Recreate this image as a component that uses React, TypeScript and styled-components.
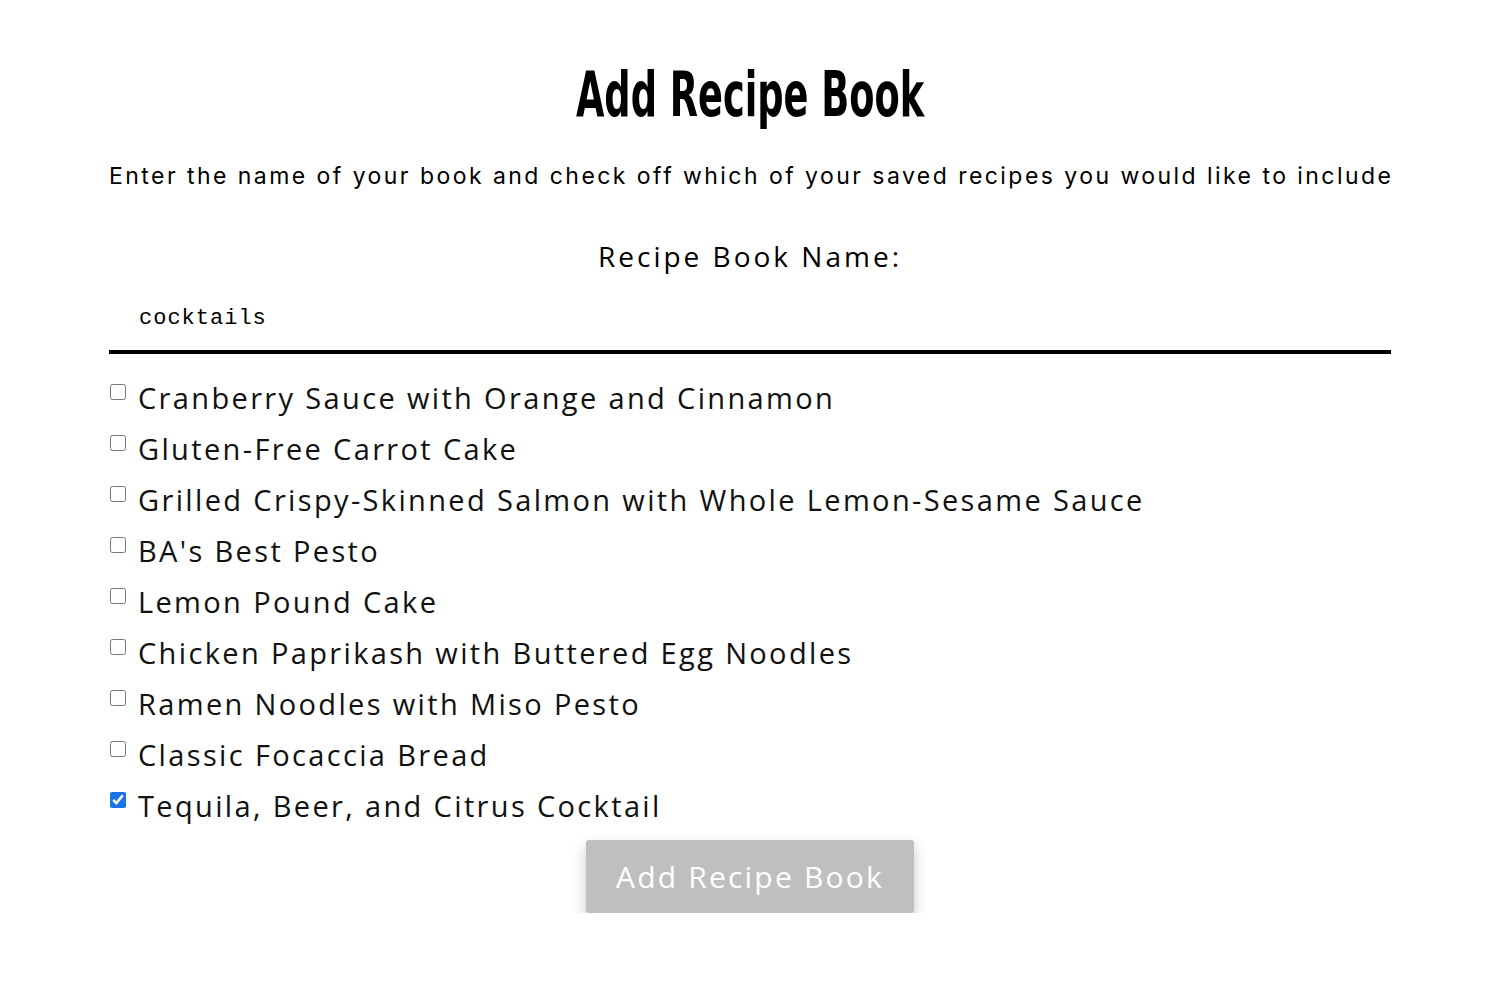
import styled, { createGlobalStyle } from "styled-components";

const recipes = [
  { name: "Cranberry Sauce with Orange and Cinnamon", checked: false },
  { name: "Gluten-Free Carrot Cake", checked: false },
  { name: "Grilled Crispy-Skinned Salmon with Whole Lemon-Sesame Sauce", checked: false },
  { name: "BA's Best Pesto", checked: false },
  { name: "Lemon Pound Cake", checked: false },
  { name: "Chicken Paprikash with Buttered Egg Noodles", checked: false },
  { name: "Ramen Noodles with Miso Pesto", checked: false },
  { name: "Classic Focaccia Bread", checked: false },
  { name: "Tequila, Beer, and Citrus Cocktail", checked: true },
];

const GlobalStyle = createGlobalStyle`
  html, body {
    margin: 0;
    padding: 0;
    background: #ffffff;
    color: #000;
    font-family: "Open Sans", "Liberation Sans", sans-serif;
  }
`;

const App = () => {
  return (
    <>
      <GlobalStyle />
      <Page>
        <Title>Add Recipe Book</Title>
        <Subtitle>
          Enter the name of your book and check off which of your saved recipes you would like to include
        </Subtitle>
        <Form onSubmit={(e) => e.preventDefault()}>
          <NameLabel htmlFor="book-name">Recipe Book Name:</NameLabel>
          <NameInput id="book-name" defaultValue="cocktails" />
          <List>
            {recipes.map((recipe, index) => (
              <Item key={index}>
                <Check type="checkbox" defaultChecked={recipe.checked} />
                <span>{recipe.name}</span>
              </Item>
            ))}
          </List>
          <SubmitButton type="submit">Add Recipe Book</SubmitButton>
        </Form>
      </Page>
    </>
  );
};

const Page = styled.div`
  width: 1282px;
  margin: 0 auto;
  padding-top: 62px;
  display: flex;
  flex-direction: column;
  align-items: stretch;
`;

const Title = styled.h1`
  margin: 0;
  text-align: center;
  font-family: "Liberation Sans Narrow", "DejaVu Sans Condensed", sans-serif;
  font-weight: 700;
  font-size: 52px;
  line-height: 64px;
  transform: scale(0.785, 1.2);
`;

const Subtitle = styled.p`
  margin: 34px 0 0;
  text-align: center;
  font-family: "Inter", sans-serif;
  font-size: 23px;
  line-height: 32px;
  letter-spacing: 2.45px;
  white-space: nowrap;
`;

const Form = styled.form`
  display: flex;
  flex-direction: column;
  align-items: stretch;
  margin-top: 46px;
`;

const NameLabel = styled.label`
  text-align: center;
  font-family: "Open Sans", sans-serif;
  font-size: 28px;
  line-height: 36px;
  letter-spacing: 3px;
`;

const NameInput = styled.input`
  box-sizing: border-box;
  height: 67px;
  margin-top: 13px;
  padding: 0 0 0 30px;
  border: none;
  border-bottom: 4px solid #000;
  outline: none;
  background: transparent;
  font-family: "Liberation Mono", monospace;
  font-size: 22px;
  letter-spacing: 1px;
  color: #000;
`;

const List = styled.div`
  display: flex;
  flex-direction: column;
  margin-top: 29px;
`;

const Item = styled.label`
  display: flex;
  align-items: flex-start;
  height: 51px;
  font-family: "Open Sans", sans-serif;
  font-size: 29px;
  line-height: 29px;
  letter-spacing: 2.35px;
  color: #111;
`;

const Check = styled.input`
  width: 16px;
  height: 16px;
  margin: 1px 12px 0 1px;
  flex-shrink: 0;
  accent-color: #1a73e8;
`;

const SubmitButton = styled.button`
  align-self: center;
  width: 328px;
  height: 73px;
  margin-top: -2px;
  border: none;
  border-radius: 3px;
  background: #bfbfbf;
  color: #fff;
  font-family: "Open Sans", sans-serif;
  font-size: 30px;
  letter-spacing: 2.2px;
  box-shadow: 0 6px 14px rgba(0, 0, 0, 0.22);
  cursor: pointer;
`;

export default App;
